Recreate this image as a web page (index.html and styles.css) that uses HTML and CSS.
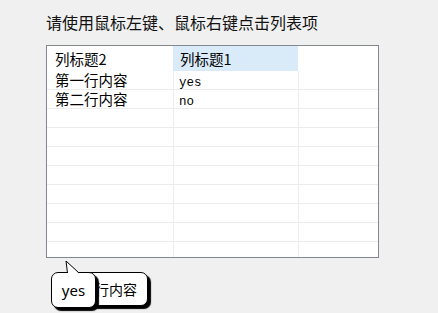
FILE: index.html
```html
<!DOCTYPE html>
<html lang="zh">
<head>
<meta charset="utf-8">
<link rel="stylesheet" href="styles.css">
</head>
<body>
<div class="page">
  <h1 class="title">请使用鼠标左键、鼠标右键点击列表项</h1>
  <div class="list">
    <div class="head">
      <div class="hc">列标题2</div>
      <div class="hc sel">列标题1</div>
      <div class="hc"></div>
    </div>
    <div class="row"><div class="cell">第一行内容</div><div class="cell sep"><span class="lat">yes</span></div><div class="cell sep"></div></div>
    <div class="row"><div class="cell">第二行内容</div><div class="cell sep"><span class="lat">no</span></div><div class="cell sep"></div></div>
    <div class="row"><div class="cell"></div><div class="cell sep"></div><div class="cell sep"></div></div>
    <div class="row"><div class="cell"></div><div class="cell sep"></div><div class="cell sep"></div></div>
    <div class="row"><div class="cell"></div><div class="cell sep"></div><div class="cell sep"></div></div>
    <div class="row"><div class="cell"></div><div class="cell sep"></div><div class="cell sep"></div></div>
    <div class="row"><div class="cell"></div><div class="cell sep"></div><div class="cell sep"></div></div>
    <div class="row"><div class="cell"></div><div class="cell sep"></div><div class="cell sep"></div></div>
    <div class="row"><div class="cell"></div><div class="cell sep"></div><div class="cell sep"></div></div>
    <div class="row"><div class="cell"></div><div class="cell sep"></div><div class="cell sep"></div></div>
  </div>

  <div class="tip tip-back">第一行内容</div>
  <div class="tip tip-front">yes</div>
  <svg class="tail" width="24" height="16" viewBox="0 0 24 16">
    <polygon points="7.5,16 6,3 19.5,16" fill="#fff"/>
    <polyline points="7.5,15 6,3 18.5,14.5" fill="none" stroke="#000" stroke-width="1"/>
  </svg>
</div>
</body>
</html>
```

FILE: styles.css
```css
html, body {
  margin: 0;
  padding: 0;
  background: #f0f0f0;
}

.page {
  position: relative;
  width: 438px;
  height: 313px;
  padding: 12px 0 0 46px;
  box-sizing: border-box;
  overflow: hidden;
  font-family: "Noto Sans CJK SC", "Noto Sans", sans-serif;
  color: #000;
}

.title {
  margin: 0 0 13px 0;
  font-size: 16px;
  line-height: 20px;
  font-weight: normal;
  color: #111;
}

.list {
  width: 333px;
  height: 213px;
  box-sizing: border-box;
  border: 1px solid #828790;
  background: #fff;
  overflow: hidden;
  font-size: 14.5px;
}

.head, .row {
  display: grid;
  grid-template-columns: 126px 125px 1fr;
}

.head {
  height: 25px;
  line-height: 25px;
}

.hc {
  padding-left: 8px;
  white-space: nowrap;
}

.hc.sel {
  background: #d9eaf9;
  padding-left: 7px;
}

.row {
  height: 19px;
  box-sizing: border-box;
  border-bottom: 1px solid #ececec;
  line-height: 18px;
}

.cell {
  padding-left: 8px;
  white-space: nowrap;
  box-sizing: border-box;
}

.cell.sep {
  border-left: 1px solid #ececec;
  padding-left: 5px;
}

.lat {
  font-family: "Liberation Mono", "DejaVu Sans Mono", monospace;
  font-size: 12.5px;
}

.tip {
  position: absolute;
  box-sizing: border-box;
  background: #fff;
  border: 1px solid #000;
  border-radius: 7px;
  box-shadow: 3px 3px 1px #000;
  white-space: nowrap;
}

.tip-back {
  left: 58px;
  top: 272px;
  width: 90px;
  height: 34px;
  padding: 6px 0 0 8px;
  font-size: 14px;
  line-height: 20px;
  z-index: 1;
}

.tip-front {
  left: 51px;
  top: 272px;
  width: 45px;
  height: 36px;
  padding-top: 7px;
  text-align: center;
  font-family: "Noto Sans", sans-serif;
  font-size: 15px;
  line-height: 20px;
  z-index: 2;
}

.tail {
  position: absolute;
  left: 60px;
  top: 258px;
  z-index: 3;
}
```
